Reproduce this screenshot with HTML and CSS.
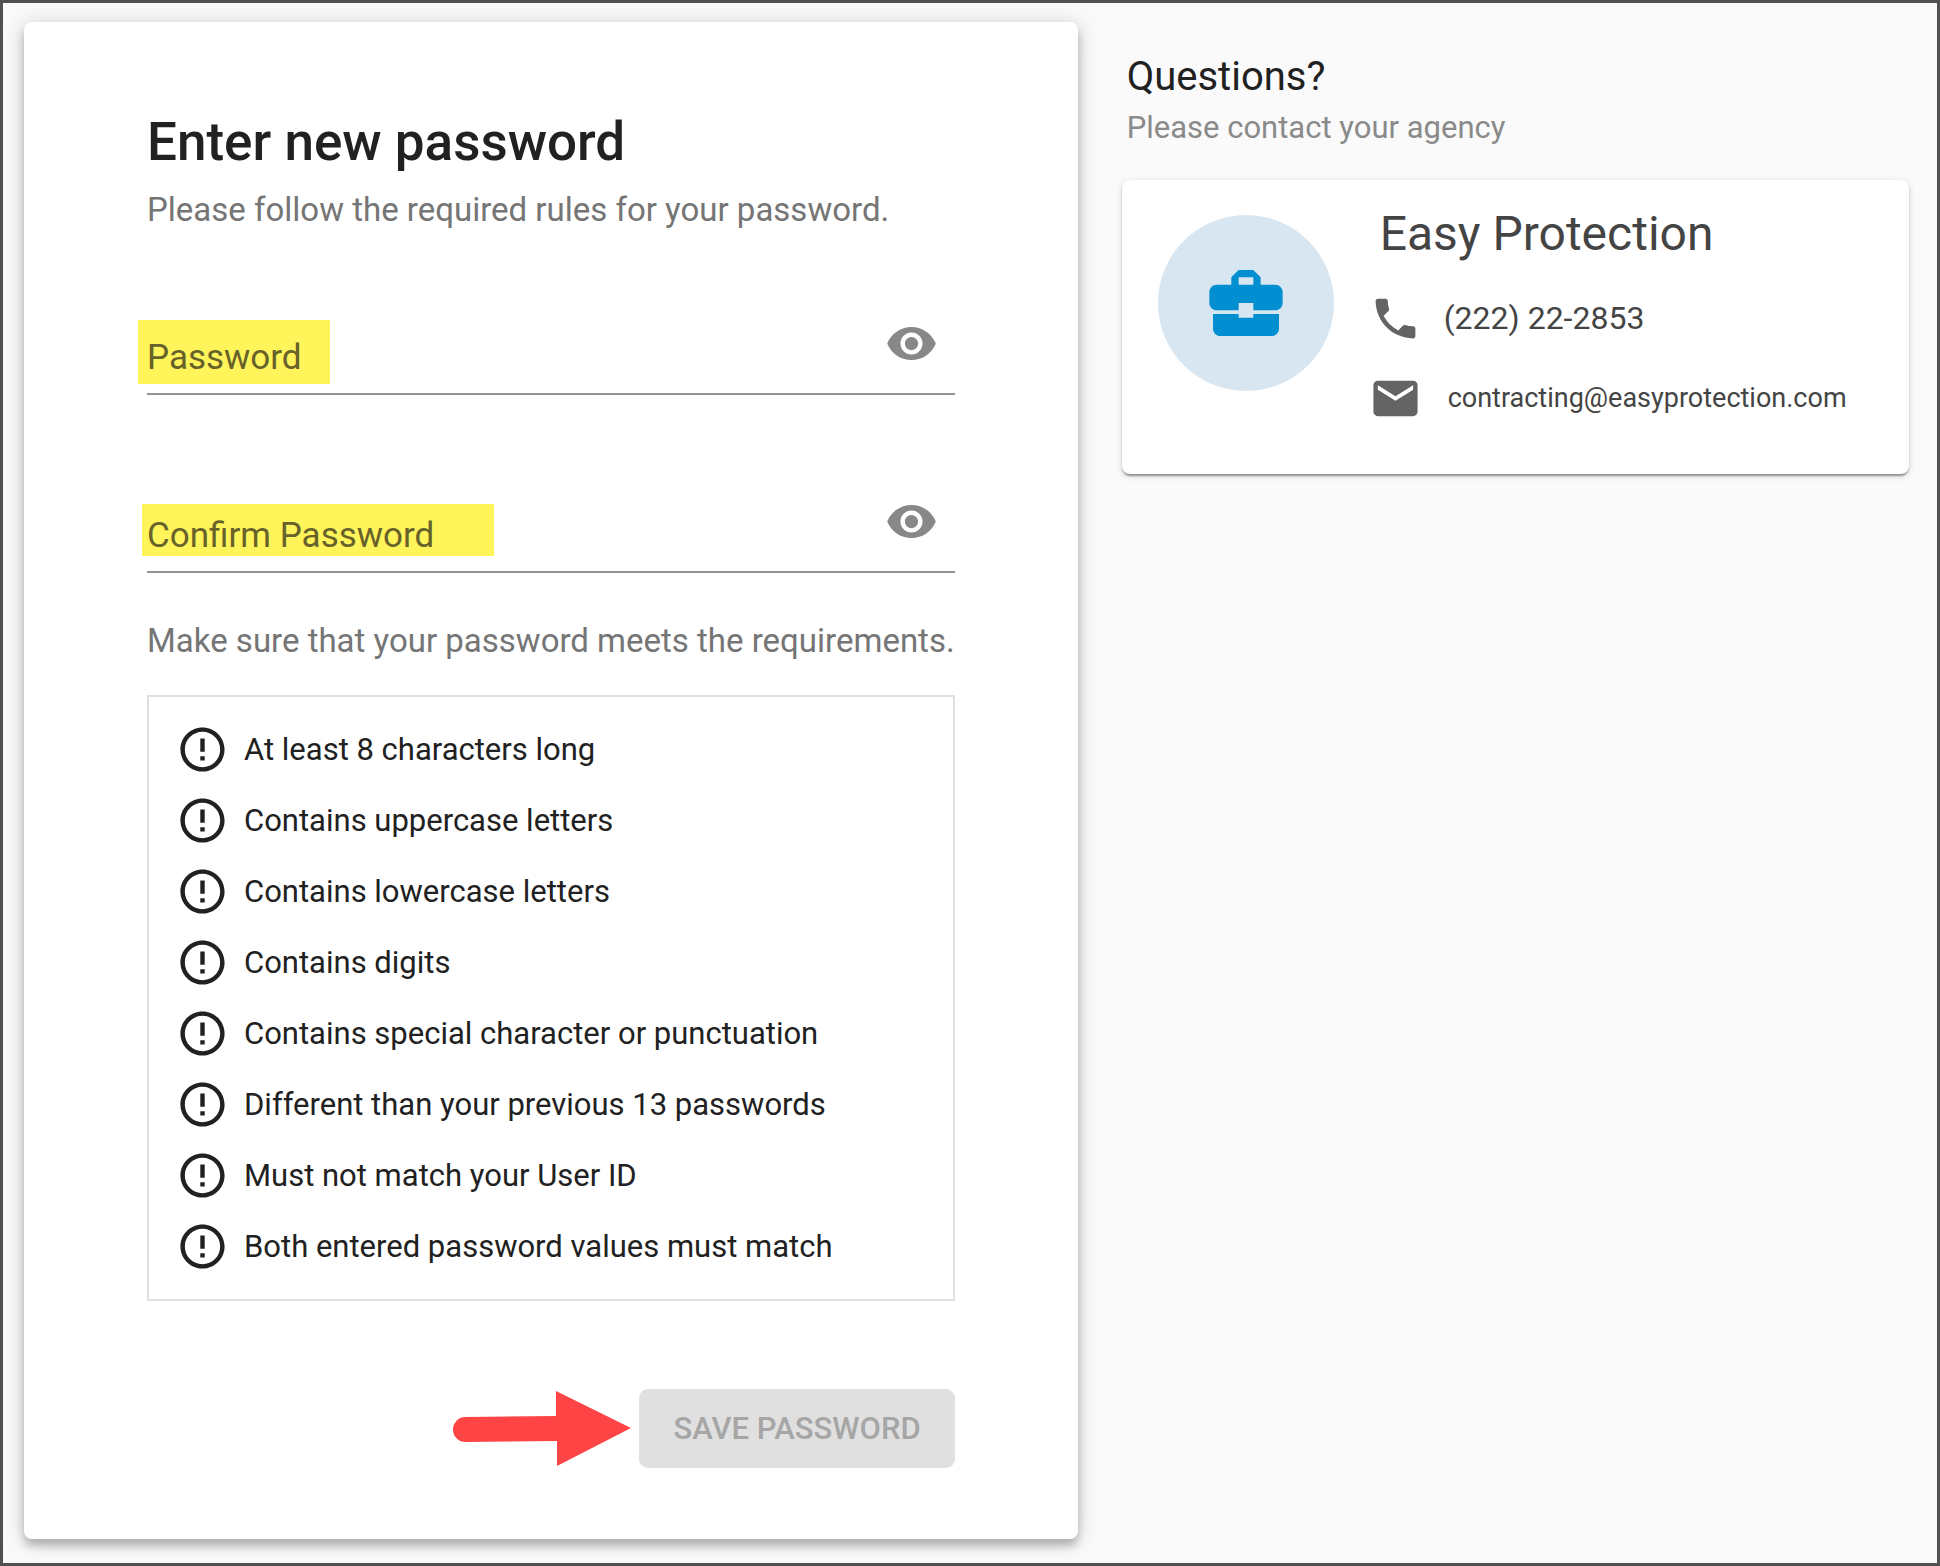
FILE: index.html
```html
<!DOCTYPE html>
<html lang="en">
<head>
    <meta charset="UTF-8">
    <meta name="viewport" content="width=device-width, initial-scale=1.0">
    <title>Enter new password</title>
    <link rel="stylesheet" href="styles.css">
</head>
<body>

    <!-- Shared icons -->
    <svg class="sprite" aria-hidden="true">
        <symbol id="eye" viewBox="0 0 24 24">
            <path d="M12 4.5C7 4.500 2.730 7.610 1 12c1.730 4.390 6 7.500 11 7.500s9.270-3.110 11-7.500c-1.730-4.390-6-7.500-11-7.500zM12 17c-2.760 0-5-2.240-5-5s2.240-5 5-5 5 2.240 5 5-2.240 5-5 5zm0-8c-1.660 0-3 1.340-3 3s1.340 3 3 3 3-1.340 3-3-1.340-3-3-3z"/>
        </symbol>
        <symbol id="alert" viewBox="0 0 24 24">
            <path d="M11 15h2v2h-2zm0-8h2v6h-2zm.99-5C6.470 2 2 6.480 2 12s4.470 10 9.990 10C17.520 22 22 17.520 22 12S17.520 2 11.990 2zM12 20c-4.420 0-8-3.580-8-8s3.580-8 8-8 8 3.580 8 8-3.580 8-8 8z"/>
        </symbol>
    </svg>

    <div class="page">
        <main class="card form-card">
            <h1>Enter new password</h1>
            <p class="hint">Please follow the required rules for your password.</p>

            <form>
                <div class="field">
                    <label for="password"><mark class="mark-password">Password</mark></label>
                    <input type="password" id="password">
                    <button type="button" class="toggle" aria-label="Show password"><svg class="icon"><use href="#eye"/></svg></button>
                </div>

                <div class="field">
                    <label for="confirm"><mark class="mark-confirm">Confirm Password</mark></label>
                    <input type="password" id="confirm">
                    <button type="button" class="toggle" aria-label="Show confirm password"><svg class="icon"><use href="#eye"/></svg></button>
                </div>

                <p class="hint rules-hint">Make sure that your password meets the requirements.</p>

                <ul class="rules">
                    <li><svg class="icon"><use href="#alert"/></svg>At least 8 characters long</li>
                    <li><svg class="icon"><use href="#alert"/></svg>Contains uppercase letters</li>
                    <li><svg class="icon"><use href="#alert"/></svg>Contains lowercase letters</li>
                    <li><svg class="icon"><use href="#alert"/></svg>Contains digits</li>
                    <li><svg class="icon"><use href="#alert"/></svg>Contains special character or punctuation</li>
                    <li><svg class="icon"><use href="#alert"/></svg>Different than your previous 13 passwords</li>
                    <li><svg class="icon"><use href="#alert"/></svg>Must not match your User ID</li>
                    <li><svg class="icon"><use href="#alert"/></svg>Both entered password values must match</li>
                </ul>

                <div class="actions">
                    <svg class="arrow" viewBox="0 0 178 76" aria-hidden="true">
                        <path d="M12 26L103 25V0L178 37L104 75V50L13 51A12.500 12.500 0 0 1 12 26z"/>
                    </svg>
                    <button type="submit" class="save" disabled>SAVE PASSWORD</button>
                </div>
            </form>
        </main>

        <aside class="contact">
            <h2>Questions?</h2>
            <p class="contact-hint">Please contact your agency</p>

            <div class="card agency">
                <div class="avatar">
                    <svg viewBox="0 0 24 24">
                        <path d="M10 16v-1H3.010L3 19c0 1.110.89 2 2 2h14c1.110 0 2-.89 2-2v-4h-7v1h-4zm10-9h-4.010V5l-2-2h-4l-2 2v2H4c-1.100 0-2 .9-2 2v3c0 1.110.89 2 2 2h6v-2h4v2h6c1.100 0 2-.9 2-2V9c0-1.100-.9-2-2-2zm-6 0h-4V5h4v2z"/>
                    </svg>
                </div>
                <div class="details">
                    <h3>Easy Protection</h3>
                    <div class="line phone">
                        <svg class="icon" viewBox="0 0 24 24"><path d="M6.620 10.790c1.440 2.830 3.760 5.140 6.590 6.590l2.200-2.200c.27-.27.67-.36 1.020-.24 1.120.37 2.330.57 3.570.57.55 0 1 .45 1 1V20c0 .55-.45 1-1 1-9.390 0-17-7.610-17-17 0-.55.45-1 1-1h3.500c.55 0 1 .45 1 1 0 1.250.2 2.450.57 3.570.11.35.03.74-.25 1.020l-2.200 2.200z"/></svg>
                        <span>(222) 22-2853</span>
                    </div>
                    <div class="line email">
                        <svg class="icon" viewBox="0 0 24 24"><path d="M20 4H4c-1.100 0-1.990.9-1.990 2L2 18c0 1.100.9 2 2 2h16c1.100 0 2-.9 2-2V6c0-1.100-.9-2-2-2zm0 4l-8 5-8-5V6l8 5 8-5v2z"/></svg>
                        <span>contracting@easyprotection.com</span>
                    </div>
                </div>
            </div>
        </aside>
    </div>

</body>
</html>
```
FILE: styles.css
```css
* {
    box-sizing: border-box;
}
body {
    margin: 0;
    min-height: 100vh;
    border: 3px solid #505050;
    background-color: #fafafa;
    font-family: Roboto, sans-serif;
    color: #212121;
}
h1, h2, h3, p, ul {
    margin: 0;
    padding: 0;
    font-weight: 400;
}
.sprite {
    display: none;
}
.icon {
    width: 53px;
    height: 53px;
    flex-shrink: 0;
    display: block;
    fill: currentColor;
}
.page {
    display: grid;
    grid-template-columns: 1053fr 788fr;
    gap: 44px;
    align-items: start;
    padding: 19px 28px 24px 21px;
}
.card {
    background: #fff;
    border-radius: 8px;
}

/* Password form */
.form-card {
    padding: 84px 123px 71px 123px;
    box-shadow: 0 7px 9px rgba(0, 0, 0, 0.22), 0 2px 22px rgba(0, 0, 0, 0.18);
}
h1 {
    font-size: 53px;
    line-height: 72px;
    font-weight: 500;
}
.hint {
    font-size: 33px;
    line-height: 44px;
    color: #757575;
    padding-top: 10px;
}
.field {
    display: flex;
    align-items: flex-end;
    height: 178px;
    border-bottom: 2px solid #949494;
}
.hint + form .field:first-child {
    height: 163px;
}
.field label {
    font-size: 35px;
    line-height: 40px;
    margin-bottom: 15px;
}
mark {
    background: #fff45a;
    color: #66622a;
}
.mark-password {
    padding: 17px 28px 6px 9px;
    margin-left: -9px;
}
.mark-confirm {
    padding: 11px 60px 0 5px;
    margin-left: -5px;
}
.field input {
    flex: 1;
    min-width: 0;
    height: 60px;
    border: none;
    outline: none;
    background: transparent;
    font: inherit;
    font-size: 35px;
}
.toggle {
    border: none;
    background: none;
    padding: 0;
    margin: 0 17px 23px 0;
    color: #888;
    cursor: pointer;
}
.rules-hint {
    padding-top: 46px;
    white-space: nowrap;
}
.rules {
    list-style: none;
    margin-top: 32px;
    padding: 17px 27px;
    border: 2px solid #e0e0e0;
}
.rules li {
    display: flex;
    align-items: center;
    gap: 15px;
    height: 71px;
    font-size: 31px;
}
.actions {
    display: flex;
    justify-content: flex-end;
    align-items: center;
    gap: 8px;
    margin-top: 88px;
}
.arrow {
    width: 178px;
    height: 76px;
    fill: #fe4444;
}
.save {
    border: none;
    border-radius: 9px;
    padding: 0 34px;
    height: 79px;
    background: #e0e0e0;
    color: #a6a6a6;
    font-family: inherit;
    font-size: 31px;
    font-weight: 500;
}

/* Agency contact */
.contact {
    padding-top: 31px;
}
h2 {
    font-size: 40px;
    line-height: 48px;
    padding-left: 5px;
}
.contact-hint {
    font-size: 31px;
    line-height: 40px;
    color: #8a8a8a;
    padding: 7px 0 0 5px;
}
.agency {
    display: flex;
    gap: 40px;
    margin-top: 32px;
    padding: 25px 36px;
    color: #444;
    box-shadow: 0 4px 2px -2px rgba(0, 0, 0, 0.2), 0 2px 2px rgba(0, 0, 0, 0.2), 0 2px 7px rgba(0, 0, 0, 0.14);
}
.avatar {
    display: flex;
    align-items: center;
    justify-content: center;
    flex-shrink: 0;
    width: 176px;
    height: 176px;
    margin-top: 10px;
    border-radius: 50%;
    background: #d8e6f1;
}
.avatar svg {
    width: 88px;
    height: 88px;
    fill: #028fd1;
}
.details {
    padding-bottom: 11px;
}
h3 {
    font-size: 48px;
    line-height: 58px;
    padding-left: 6px;
}
.line {
    display: flex;
    align-items: center;
    gap: 22px;
    height: 80px;
    font-size: 32px;
}
.line .icon {
    color: #646464;
    margin-left: -5px;
}
.phone {
    margin-top: 15px;
}
.email {
    font-size: 27px;
    gap: 26px;
}
```
